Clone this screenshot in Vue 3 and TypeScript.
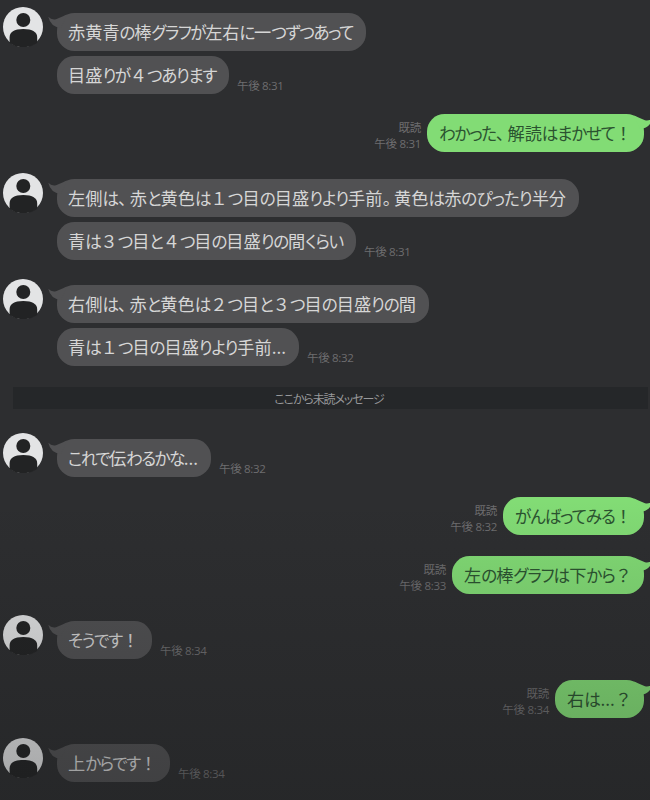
<script setup lang="ts">
import { onMounted, ref } from 'vue'

interface Line {
  text: string
  width: number
}

interface Message {
  mine: boolean
  time: string
  lines: Line[]
  gap: number
}

const before: Message[] = [
  { mine: false, time: '8:31', gap: 0, lines: [{ text: '赤黄青の棒グラフが左右に一つずつあって', width: 309 }, { text: '目盛りが４つあります', width: 172 }] },
  { mine: true, time: '8:31', gap: 20, lines: [{ text: 'わかった、解読はまかせて！', width: 217 }] },
  { mine: false, time: '8:31', gap: 27, lines: [{ text: '左側は、赤と黄色は１つ目の目盛りより手前。黄色は赤のぴったり半分', width: 522 }, { text: '青は３つ目と４つ目の目盛りの間くらい', width: 299 }] },
  { mine: false, time: '8:32', gap: 25, lines: [{ text: '右側は、赤と黄色は２つ目と３つ目の目盛りの間', width: 372 }, { text: '青は１つ目の目盛りより手前...', width: 242 }] },
]

const after: Message[] = [
  { mine: false, time: '8:32', gap: 30, lines: [{ text: 'これで伝わるかな...', width: 154 }] },
  { mine: true, time: '8:32', gap: 20, lines: [{ text: 'がんばってみる！', width: 141 }] },
  { mine: true, time: '8:33', gap: 21, lines: [{ text: '左の棒グラフは下から？', width: 192 }] },
  { mine: false, time: '8:34', gap: 27, lines: [{ text: 'そうです！', width: 95 }] },
  { mine: true, time: '8:34', gap: 21, lines: [{ text: '右は...？', width: 89 }] },
  { mine: false, time: '8:34', gap: 26, lines: [{ text: '上からです！', width: 113 }] },
]

const groups = [before, after]
const root = ref<HTMLElement | null>(null)

// Splits a line into runs of kana, punctuation and everything else.
function runs(text: string): { kind: string; text: string }[] {
  return (text.match(/[ぁ-んァ-ヶー]+|[、。]|[^ぁ-んァ-ヶー、。]+/g) ?? []).map((t) => ({
    kind: /^[ぁ-んァ-ヶー]/.test(t) ? 'kana' : /^[、。]/.test(t) ? 'stop' : 'plain',
    text: t,
  }))
}

// Distributes the spare width of each bubble over its kana.
onMounted(() => {
  root.value?.querySelectorAll<HTMLElement>('.bubble').forEach((bubble) => {
    const content = bubble.querySelector<HTMLElement>('.content')!
    const kana = Array.from(content.querySelectorAll<HTMLElement>('.kana'))
    const count = kana.reduce((n, el) => n + (el.textContent ?? '').length, 0)
    const spare = bubble.offsetWidth - 24 - content.getBoundingClientRect().width
    if (count) content.style.setProperty('--tracking', `${spare / count}px`)
  })
})
</script>

<template>
  <main ref="root" class="chat">
    <template v-for="(group, g) in groups" :key="g">
      <div v-if="g === 1" class="unread"><span>ここから未読メッセージ</span></div>
      <section
        v-for="(m, i) in group"
        :key="i"
        class="message"
        :class="{ mine: m.mine }"
        :style="{ marginTop: m.gap + 'px' }"
      >
        <svg v-if="!m.mine" class="avatar" viewBox="0 0 40 40">
          <circle cx="20" cy="20" r="20" fill="#e3e4e5" />
          <circle cx="20.3" cy="13" r="7" fill="#222324" />
          <path d="M6.6 36V30.5C6.6 25 11 22 20.3 22S34.2 25 34.2 30.5V36Q28 40.2 20.3 40.2T6.6 36Z" fill="#222324" />
        </svg>
        <div class="stack">
          <div v-for="(line, n) in m.lines" :key="n" class="row">
            <div class="bubble" :style="{ width: line.width + 'px' }">
              <svg v-if="n === 0" class="tail" viewBox="0 0 20 18">
                <path d="M.3 3.8Q3.5 7.2 8 6.2Q12 4.5 19 1.4L13 15Q2.5 14 .3 3.8Z" />
              </svg>
              <span class="content"><span v-for="(r, k) in runs(line.text)" :key="k" :class="r.kind">{{ r.text }}</span></span>
            </div>
            <div v-if="n === m.lines.length - 1" class="meta">
              <span v-if="m.mine">既読</span>
              <span>午後 {{ m.time }}</span>
            </div>
          </div>
        </div>
      </section>
    </template>
    <div class="shade"></div>
  </main>
</template>

<style>
body {
  background: #2d2e30;
}
</style>

<style scoped>
.chat {
  position: relative;
  box-sizing: border-box;
  width: 650px;
  height: 800px;
  padding-top: 13px;
  overflow: hidden;
  background: #2d2e30;
  font-family: "Noto Sans CJK JP", sans-serif;
}
.message {
  display: flex;
  align-items: flex-start;
  padding: 0 6px 0 3px;
}
.mine {
  justify-content: flex-end;
}
.avatar {
  flex: none;
  width: 40px;
  height: 40px;
  margin: -6px 14px -40px 0;
}
.stack {
  display: flex;
  flex-direction: column;
  gap: 5px;
}
.row {
  display: flex;
  align-items: flex-end;
}
.mine .row {
  flex-direction: row-reverse;
}
.bubble {
  position: relative;
  box-sizing: border-box;
  flex: none;
  height: 38px;
  padding-left: 11px;
  border-radius: 17.5px;
  background: #515153;
  color: #d6d6d6;
  font-size: 17.2px;
  line-height: 38px;
  white-space: nowrap;
}
.mine .bubble {
  padding-left: 12px;
  background: #82dc75;
  color: #2b5330;
}
.content {
  display: inline-block;
}
.kana {
  font-size: 16.6px;
  font-feature-settings: "palt";
  letter-spacing: var(--tracking, 0px);
}
.stop {
  font-feature-settings: "palt";
  letter-spacing: 3px;
}
.tail {
  position: absolute;
  left: -9px;
  top: 0;
  width: 20px;
  height: 18px;
  fill: #515153;
}
.mine .tail {
  left: auto;
  right: -9px;
  transform: scaleX(-1);
  fill: #82dc75;
}
.meta {
  display: flex;
  flex-direction: column;
  padding: 0 8px 0 8px;
  color: #6d6d6f;
  font-family: "Open Sans", "Noto Sans CJK JP", sans-serif;
  font-size: 11.5px;
  line-height: 16px;
  letter-spacing: -0.3px;
  white-space: nowrap;
}
.mine .meta {
  align-items: flex-end;
  padding: 0 6px 0 0;
}
.unread {
  display: flex;
  align-items: center;
  justify-content: center;
  height: 22px;
  margin: 21px 2px 0 13px;
  padding-right: 3px;
  background: #252729;
  color: #97989a;
  font-size: 12px;
  letter-spacing: -1.1px;
  font-feature-settings: "palt";
}
.shade {
  position: absolute;
  inset: 500px 0 0;
  background: linear-gradient(rgba(24, 25, 26, 0), rgba(24, 25, 26, 0.31));
  pointer-events: none;
}
</style>
